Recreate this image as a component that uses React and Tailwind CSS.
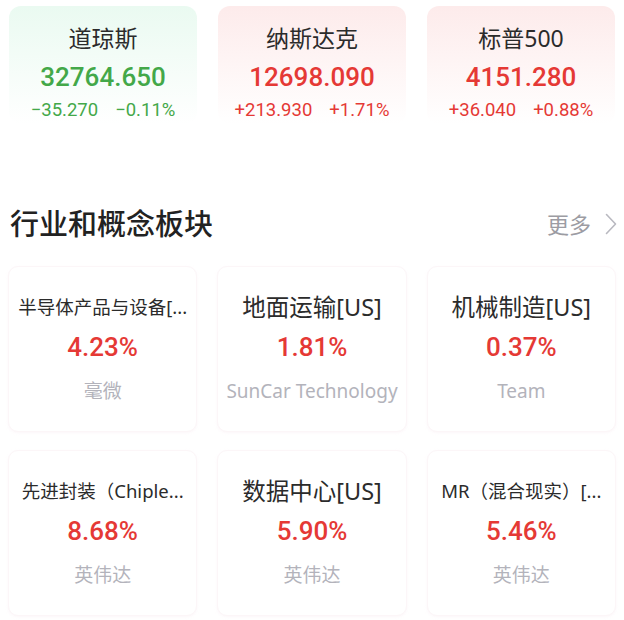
import React from "react";

const FONT = { fontFamily: '"Noto Sans", "Noto Sans CJK SC", sans-serif' };
const NUM = { fontFamily: 'Roboto, "Noto Sans CJK SC", sans-serif' };

const indices = [
  { name: "道琼斯", value: "32764.650", chg: "−35.270", pct: "−0.11%", up: false },
  { name: "纳斯达克", value: "12698.090", chg: "+213.930", pct: "+1.71%", up: true },
  { name: "标普500", value: "4151.280", chg: "+36.040", pct: "+0.88%", up: true },
];

const sectors = [
  { title: "半导体产品与设备[...", small: true, pct: "4.23%", sub: "毫微" },
  { title: "地面运输[US]", small: false, pct: "1.81%", sub: "SunCar Technology" },
  { title: "机械制造[US]", small: false, pct: "0.37%", sub: "Team" },
  { title: "先进封装（Chiple...", small: true, pct: "8.68%", sub: "英伟达" },
  { title: "数据中心[US]", small: false, pct: "5.90%", sub: "英伟达" },
  { title: "MR（混合现实）[...", small: true, pct: "5.46%", sub: "英伟达" },
];

function IndexCard({ d }) {
  return (
    <div
      className={
        "flex flex-col items-center rounded-[12px] pt-[17px] h-[118px] " +
        (d.up
          ? "bg-gradient-to-b from-[#fdebeb] to-[#ffffff]"
          : "bg-gradient-to-b from-[#eafaf1] to-[#ffffff]")
      }
    >
      <div className="text-[23px] leading-[30px] text-[#2b2b2b]">{d.name}</div>
      <div
        style={NUM}
        className={
          "mt-[7px] text-[26px] leading-[34px] font-medium " +
          (d.up ? "text-[#e53935]" : "text-[#43a849]")
        }
      >
        {d.value}
      </div>
      <div
        style={NUM}
        className={
          "mt-[3px] flex gap-[17px] text-[18.5px] leading-[26px] " +
          (d.up ? "text-[#e53935]" : "text-[#43a849]")
        }
      >
        <span>{d.chg}</span>
        <span>{d.pct}</span>
      </div>
    </div>
  );
}

function SectorCard({ d }) {
  return (
    <div className="flex flex-col items-center h-[166px] rounded-[10px] bg-white border border-[#fcf6f8] shadow-[0_1px_3px_rgba(245,230,238,0.35)] pt-[26px] overflow-hidden">
      <div
        className={
          "leading-[28px] text-[#2b2b2b] whitespace-nowrap " +
          (d.small ? "text-[18.5px]" : "text-[23.5px]")
        }
      >
        {d.title}
      </div>
      <div
        style={NUM}
        className="mt-[10px] text-[26px] leading-[32px] font-medium text-[#e53935]"
      >
        {d.pct}
      </div>
      <div className="mt-[15px] text-[19px] leading-[26px] text-[#b3b3bb] whitespace-nowrap">
        {d.sub}
      </div>
    </div>
  );
}

export default function App() {
  return (
    <div className="w-[624px] h-[620px] bg-white overflow-hidden" style={FONT}>
      <div className="grid grid-cols-3 gap-[21px] px-[9px] pt-[6px]">
        {indices.map((d) => (
          <IndexCard key={d.name} d={d} />
        ))}
      </div>

      <div className="mt-[82px] flex items-center justify-between pl-[10px] pr-[7px] h-[36px]">
        <div className="text-[29px] leading-[36px] font-medium text-[#222222]">
          行业和概念板块
        </div>
        <div className="flex items-center gap-[14px]">
          <span className="text-[22px] leading-[30px] text-[#9c9ca3]">更多</span>
          <svg width="12" height="22" viewBox="0 0 12 22" fill="none">
            <polyline
              points="1.5,1.5 10.5,11 1.5,20.5"
              stroke="#b9b9c0"
              strokeWidth="1.6"
              strokeLinecap="round"
              strokeLinejoin="round"
            />
          </svg>
        </div>
      </div>

      <div className="mt-[24px] grid grid-cols-3 gap-x-[20px] gap-y-[18px] px-[8px]">
        {sectors.map((d, i) => (
          <SectorCard key={i} d={d} />
        ))}
      </div>
    </div>
  );
}
